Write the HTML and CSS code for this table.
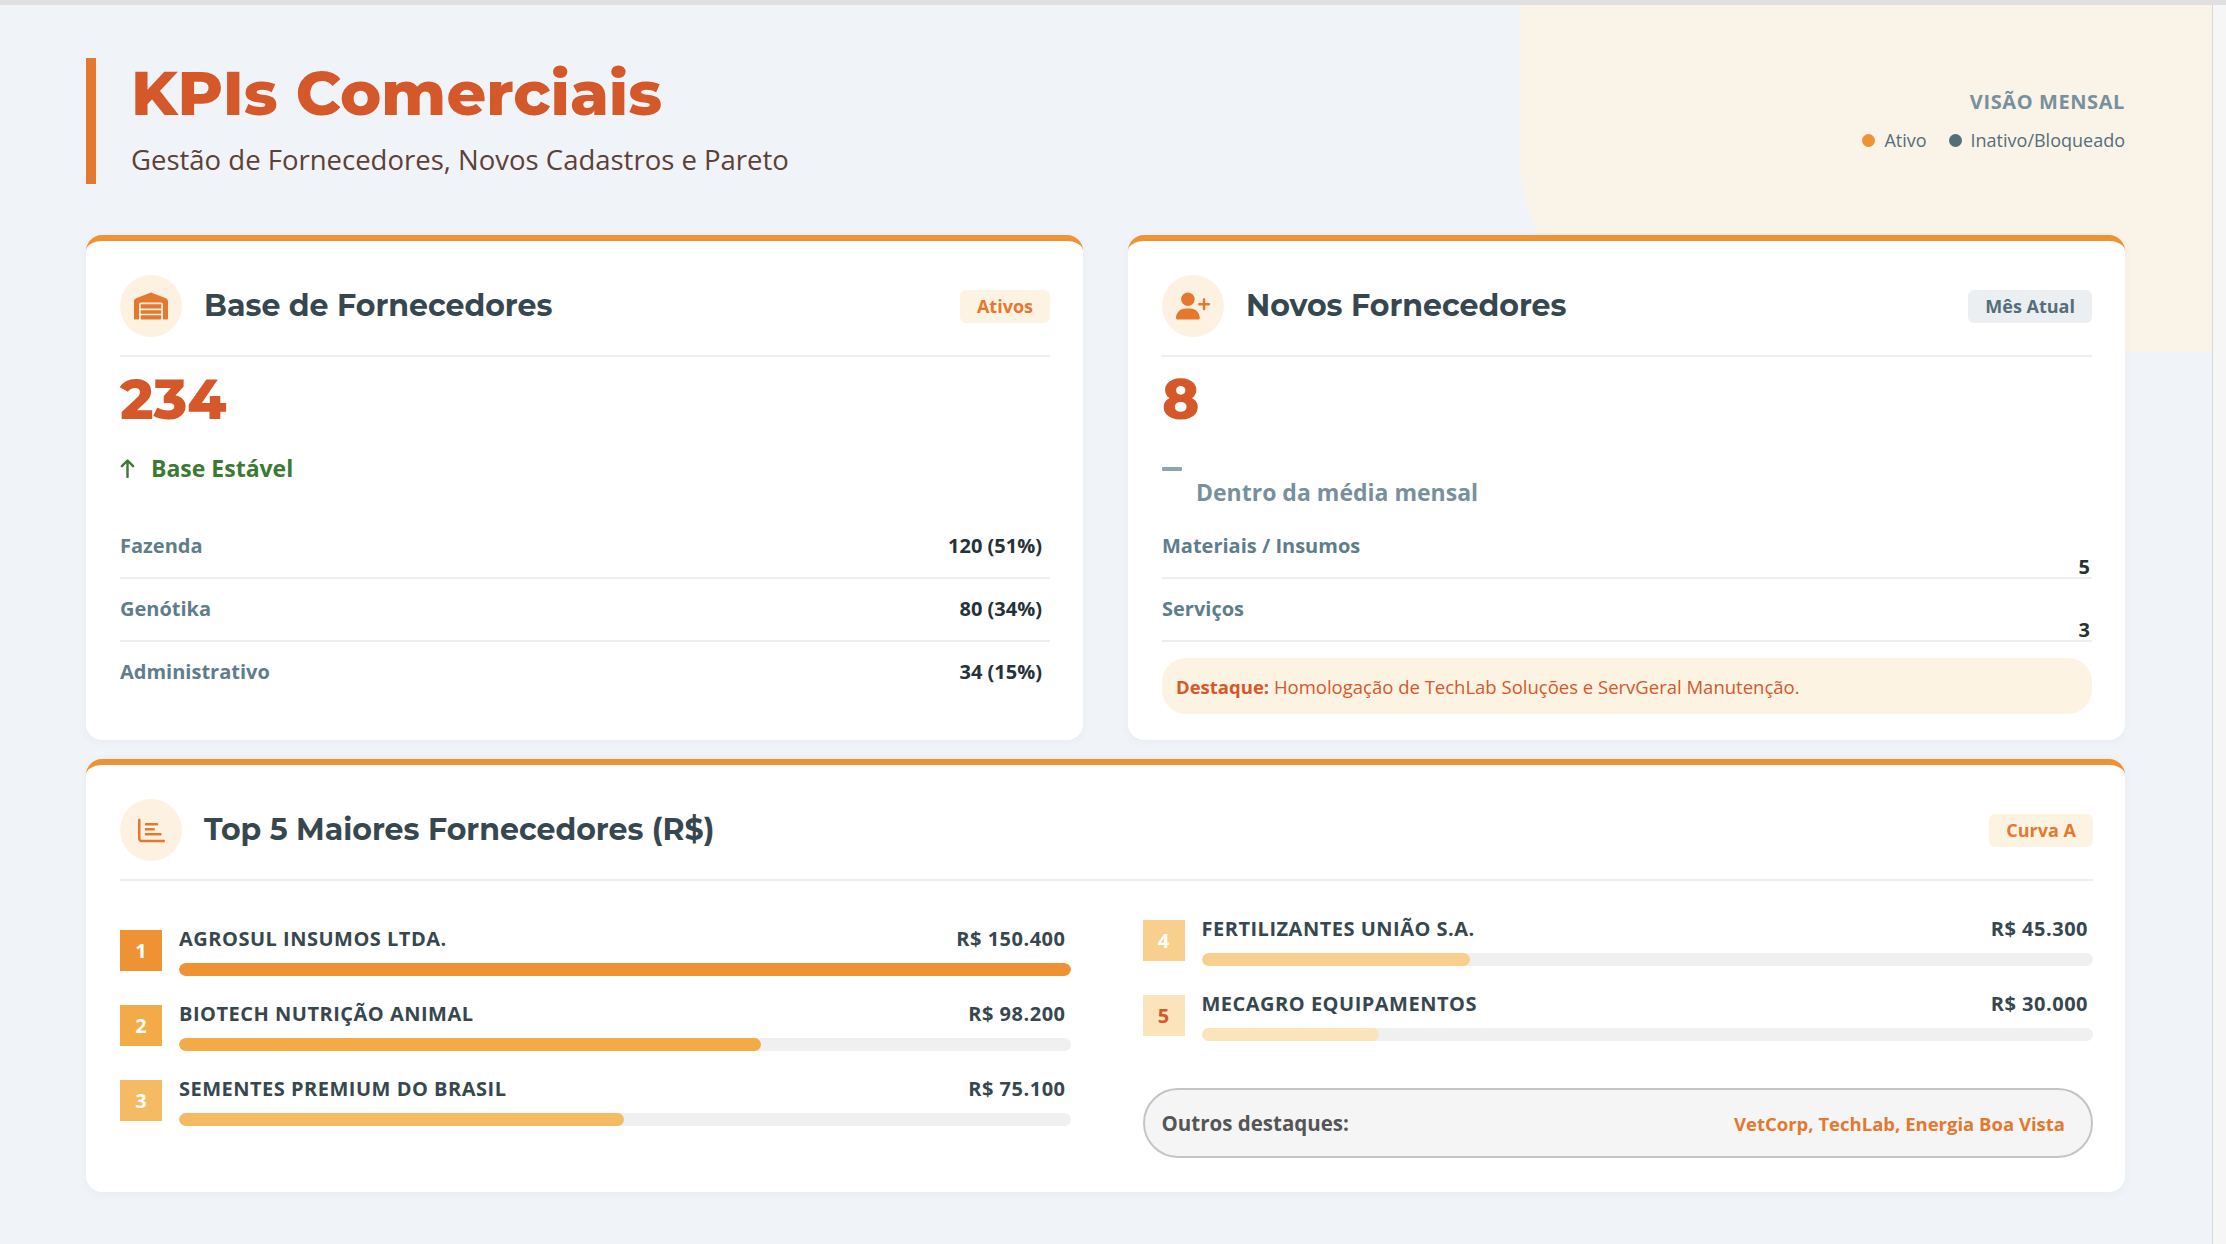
FILE: index.html
```html
<!DOCTYPE html>
<html lang="pt-BR">
<head>
<meta charset="utf-8">
<title>KPIs Comerciais</title>
<link rel="stylesheet" href="styles.css">
</head>
<body>
<div class="page">
  <div class="deco"></div>

  <header class="header">
    <div class="title-block">
      <h1 class="title">KPIs Comerciais</h1>
      <p class="subtitle">Gestão de Fornecedores, Novos Cadastros e Pareto</p>
    </div>
    <div class="header-right">
      <div class="view-label">VISÃO MENSAL</div>
      <div class="legend">
        <span class="legend-item"><span class="dot dot-active"></span>Ativo</span>
        <span class="legend-item"><span class="dot dot-inactive"></span>Inativo/Bloqueado</span>
      </div>
    </div>
  </header>

  <section class="cards">
    <article class="card">
      <div class="card-head">
        <div class="icon-circle">
          <svg class="ico ico-wide" viewBox="0 0 640 512"><path d="M0 488V171.3c0-26.2 15.9-49.7 40.2-59.4L308.1 4.8c7.6-3.1 16.1-3.1 23.8 0L599.8 111.9c24.3 9.7 40.2 33.3 40.2 59.4V488c0 13.3-10.7 24-24 24H568c-13.3 0-24-10.7-24-24V224c0-17.7-14.3-32-32-32H128c-17.7 0-32 14.3-32 32V488c0 13.3-10.7 24-24 24H24c-13.3 0-24-10.7-24-24zm488 24l-336 0c-13.3 0-24-10.7-24-24l0-56 384 0 0 56c0 13.3-10.7 24-24 24zM128 400V336H512v64H128zm0-96V224H512v80H128z"/></svg>
        </div>
        <h2 class="card-title">Base de Fornecedores</h2>
        <span class="badge badge-orange">Ativos</span>
      </div>
      <div class="big-number">234</div>
      <div class="trend">
        <div class="trend-up">
          <svg class="arrow" viewBox="0 0 15 20"><path d="M7.5 19V2.6M1.9 8.2L7.5 2.5l5.6 5.7" fill="none" stroke="currentColor" stroke-width="2.4" stroke-linecap="round" stroke-linejoin="round"/></svg>
          <span>Base Estável</span>
        </div>
      </div>
      <div class="rows">
        <div class="row"><span class="row-label">Fazenda</span><span class="row-val">120 (51%)</span></div>
        <div class="row"><span class="row-label">Genótika</span><span class="row-val">80 (34%)</span></div>
        <div class="row"><span class="row-label">Administrativo</span><span class="row-val">34 (15%)</span></div>
      </div>
    </article>

    <article class="card">
      <div class="card-head">
        <div class="icon-circle">
          <svg class="ico ico-wide" viewBox="0 0 640 512"><path d="M96 128a128 128 0 1 1 256 0A128 128 0 1 1 96 128zM0 482.3C0 383.8 79.8 304 178.3 304h91.4C368.2 304 448 383.8 448 482.3c0 16.4-13.3 29.7-29.7 29.7H29.7C13.3 512 0 498.7 0 482.3zM504 312V248H440c-13.3 0-24-10.7-24-24s10.7-24 24-24h64V136c0-13.3 10.7-24 24-24s24 10.7 24 24v64h64c13.3 0 24 10.7 24 24s-10.7 24-24 24H552v64c0 13.3-10.7 24-24 24s-24-10.7-24-24z"/></svg>
        </div>
        <h2 class="card-title">Novos Fornecedores</h2>
        <span class="badge badge-gray">Mês Atual</span>
      </div>
      <div class="big-number">8</div>
      <div class="trend">
        <div class="trend-flat">
          <span class="flat-dash"></span>
          <span class="flat-text">Dentro da média mensal</span>
        </div>
      </div>
      <div class="rows">
        <div class="row row-stack"><span class="row-label">Materiais / Insumos</span><span class="row-val">5</span></div>
        <div class="row row-stack"><span class="row-label">Serviços</span><span class="row-val">3</span></div>
      </div>
      <div class="highlight"><strong>Destaque:</strong> Homologação de TechLab Soluções e ServGeral Manutenção.</div>
    </article>
  </section>

  <section class="card card-wide">
    <div class="card-head">
      <div class="icon-circle">
        <svg class="ico ico-chart" viewBox="0 0 512 512"><path d="M24 32c13.3 0 24 10.7 24 24V408c0 13.3 10.7 24 24 24H488c13.3 0 24 10.7 24 24s-10.7 24-24 24H72c-39.8 0-72-32.2-72-72V56C0 42.7 10.7 32 24 32zM128 136c0-13.3 10.7-24 24-24l208 0c13.3 0 24 10.7 24 24s-10.7 24-24 24l-208 0c-13.3 0-24-10.7-24-24zm24 72H296c13.3 0 24 10.7 24 24s-10.7 24-24 24H152c-13.3 0-24-10.7-24-24s10.7-24 24-24zm0 96H424c13.3 0 24 10.7 24 24s-10.7 24-24 24H152c-13.3 0-24-10.7-24-24s10.7-24 24-24z"/></svg>
      </div>
      <h2 class="card-title">Top 5 Maiores Fornecedores (R$)</h2>
      <span class="badge badge-orange">Curva A</span>
    </div>
    <div class="top-grid">
      <div class="top-col top-col-left">
        <div class="item">
          <div class="rank rank-1">1</div>
          <div class="item-info">
            <div class="item-line"><span class="item-name">AGROSUL INSUMOS LTDA.</span><span class="item-val">R$ 150.400</span></div>
            <div class="bar"><div class="fill fill-1" style="width:100%"></div></div>
          </div>
        </div>
        <div class="item">
          <div class="rank rank-2">2</div>
          <div class="item-info">
            <div class="item-line"><span class="item-name">BIOTECH NUTRIÇÃO ANIMAL</span><span class="item-val">R$ 98.200</span></div>
            <div class="bar"><div class="fill fill-2" style="width:65.3%"></div></div>
          </div>
        </div>
        <div class="item">
          <div class="rank rank-3">3</div>
          <div class="item-info">
            <div class="item-line"><span class="item-name">SEMENTES PREMIUM DO BRASIL</span><span class="item-val">R$ 75.100</span></div>
            <div class="bar"><div class="fill fill-3" style="width:49.9%"></div></div>
          </div>
        </div>
      </div>
      <div class="top-col">
        <div class="item">
          <div class="rank rank-4">4</div>
          <div class="item-info">
            <div class="item-line"><span class="item-name">FERTILIZANTES UNIÃO S.A.</span><span class="item-val">R$ 45.300</span></div>
            <div class="bar"><div class="fill fill-4" style="width:30.1%"></div></div>
          </div>
        </div>
        <div class="item">
          <div class="rank rank-5">5</div>
          <div class="item-info">
            <div class="item-line"><span class="item-name">MECAGRO EQUIPAMENTOS</span><span class="item-val">R$ 30.000</span></div>
            <div class="bar"><div class="fill fill-5" style="width:19.9%"></div></div>
          </div>
        </div>
        <div class="others">
          <span class="others-label">Outros destaques:</span>
          <span class="others-names">VetCorp, TechLab, Energia Boa Vista</span>
        </div>
      </div>
    </div>
  </section>
</div>
</body>
</html>
```
FILE: styles.css
```css
* { box-sizing: border-box; }

html, body {
  margin: 0;
  padding: 0;
}

body {
  background: #f6f6f6;
  border-top: 5px solid #e0e0e0;
  font-family: "Open Sans", "Liberation Sans", sans-serif;
  color: #37474f;
}

.page {
  position: relative;
  width: 2213px;
  height: 1239px;
  overflow: hidden;
  background: #f0f4f8;
  border-right: 1px solid #d8d8d8;
  padding: 53px 87px 0 86px;
}

.deco {
  position: absolute;
  top: 0;
  right: 0;
  width: 692px;
  height: 347px;
  background: #faf3e8;
  border-bottom-left-radius: 200px;
  z-index: 0;
}

/* Header */
.header {
  position: relative;
  z-index: 1;
  display: flex;
  justify-content: space-between;
  align-items: flex-start;
}

.title-block {
  border-left: 10px solid #e4782f;
  padding: 0 0 7px 35px;
}

.title {
  margin: 0;
  font-family: "Montserrat", "Open Sans", sans-serif;
  font-weight: 800;
  font-size: 62px;
  line-height: 70px;
  color: #d4582a;
}

.subtitle {
  margin: 14px 0 0;
  font-size: 27.5px;
  line-height: 35px;
  color: #5d4037;
}

.header-right {
  margin-top: 30px;
  text-align: right;
}

.view-label {
  font-size: 20px;
  line-height: 27px;
  font-weight: 700;
  letter-spacing: 0.6px;
  color: #78909c;
}

.legend {
  margin-top: 13px;
  display: flex;
  justify-content: flex-end;
  gap: 22px;
  font-size: 18px;
  line-height: 24px;
  color: #546e7a;
}

.legend-item {
  display: flex;
  align-items: center;
  gap: 9px;
}

.dot {
  width: 13px;
  height: 13px;
  border-radius: 50%;
  display: inline-block;
}

.dot-active { background: #ef9234; }
.dot-inactive { background: #546e7a; }

/* Cards */
.cards {
  position: relative;
  z-index: 1;
  margin-top: 51px;
  display: grid;
  grid-template-columns: 1fr 1fr;
  column-gap: 45px;
}

.card {
  position: relative;
  z-index: 1;
  background: #ffffff;
  border-radius: 16px;
  border-top: 6px solid #ef9234;
  padding: 34px 33px 26px 34px;
  box-shadow: 0 2px 8px rgba(60, 70, 90, 0.05);
}

.card-head {
  display: flex;
  align-items: center;
  gap: 22px;
  padding-bottom: 18px;
  border-bottom: 2px solid #eceff1;
}

.icon-circle {
  width: 62px;
  height: 62px;
  flex: 0 0 62px;
  border-radius: 50%;
  background: #fdf2e2;
  display: flex;
  align-items: center;
  justify-content: center;
}

.ico { fill: #e4782f; display: block; }
.ico-wide { width: 34px; height: 28px; }
.ico-chart { width: 27px; height: 27px; }

.card-title {
  margin: 0;
  flex: 1;
  font-family: "Montserrat", "Open Sans", sans-serif;
  font-weight: 700;
  font-size: 30px;
  line-height: 40px;
  color: #37474f;
}

.badge {
  font-size: 18px;
  line-height: 25px;
  font-weight: 700;
  padding: 4px 17px;
  border-radius: 6px;
}

.badge-orange { background: #fdf3e3; color: #e4782f; }
.badge-gray { background: #eceff1; color: #546e7a; }

.big-number {
  margin-top: 13px;
  font-family: "Montserrat", "Open Sans", sans-serif;
  font-weight: 800;
  font-size: 56px;
  line-height: 58px;
  color: #d4582a;
}

.trend {
  margin-top: 26px;
  height: 62px;
}

.trend-up {
  display: flex;
  align-items: center;
  gap: 16px;
  font-size: 23px;
  line-height: 28px;
  font-weight: 700;
  color: #3b7a32;
}

.arrow {
  width: 15px;
  height: 20px;
  display: block;
}

.trend-flat {
  padding-top: 13px;
  font-size: 23px;
  line-height: 28px;
  font-weight: 700;
  color: #78909c;
}

.flat-dash {
  display: block;
  width: 20px;
  height: 4px;
  background: #90a4ae;
  border-radius: 1px;
}

.flat-text {
  display: block;
  margin-top: 7px;
  padding-left: 34px;
}

.rows { display: flex; flex-direction: column; }

.row {
  display: flex;
  justify-content: space-between;
  padding: 18px 0 20px;
  border-bottom: 2px solid #eceff1;
  font-size: 20px;
  line-height: 23px;
  font-weight: 700;
}

.row:last-child { border-bottom: none; }

.row-label { color: #607d8b; }
.row-val { color: #263238; padding-right: 8px; }

.row-stack {
  flex-direction: column;
  padding-bottom: 0;
}

.row-stack:last-child { border-bottom: 2px solid #eceff1; }

.row-stack .row-val {
  align-self: flex-end;
  line-height: 20px;
  padding-right: 2px;
}

.highlight {
  margin-top: 16px;
  height: 56px;
  display: flex;
  align-items: center;
  padding: 0 14px;
  border-radius: 24px;
  background: #fdf3e3;
  color: #d4582a;
  font-size: 18.5px;
  white-space: pre;
}

.highlight strong { font-weight: 700; }

/* Top 5 */
.card-wide {
  margin-top: 19px;
  padding: 34px 32px 34px 34px;
}

.top-grid {
  margin-top: 36px;
  display: grid;
  grid-template-columns: 1fr 1fr;
  column-gap: 72px;
  align-items: start;
}

.top-col {
  display: flex;
  flex-direction: column;
  gap: 26px;
}

.top-col-left { padding-top: 10px; }

.item {
  display: flex;
  align-items: center;
  gap: 17px;
}

.rank {
  width: 42px;
  height: 41px;
  flex: 0 0 42px;
  display: flex;
  align-items: center;
  justify-content: center;
  font-size: 20px;
  font-weight: 700;
  color: #ffffff;
  margin-top: -2px;
}

.rank-1 { background: #ef9234; }
.rank-2 { background: #f3ab48; }
.rank-3 { background: #f4bb63; }
.rank-4 { background: #f8cf8d; }
.rank-5 { background: #fbe3bc; color: #d4582a; }

.item-info { flex: 1; }

.item-line {
  display: flex;
  justify-content: space-between;
  font-size: 20px;
  line-height: 24px;
  font-weight: 700;
  color: #37474f;
  letter-spacing: 0.5px;
  padding-right: 5px;
}

.bar {
  margin-top: 12px;
  height: 13px;
  border-radius: 7px;
  background: #f0f0f0;
  overflow: hidden;
}

.fill { height: 100%; border-radius: 7px; }
.fill-1 { background: #ef9234; }
.fill-2 { background: #f3ab48; }
.fill-3 { background: #f4bb63; }
.fill-4 { background: #f8cf8d; }
.fill-5 { background: #fbe3bc; }

.others {
  margin-top: 21px;
  height: 70px;
  display: flex;
  align-items: center;
  justify-content: space-between;
  padding: 0 26px 0 17px;
  border: 2px solid #c4c4c4;
  border-radius: 35px;
  background: #f5f5f5;
  font-weight: 700;
}

.others-label { color: #555555; font-size: 20.5px; }
.others-names { color: #e4782f; font-size: 18.5px; }
```
